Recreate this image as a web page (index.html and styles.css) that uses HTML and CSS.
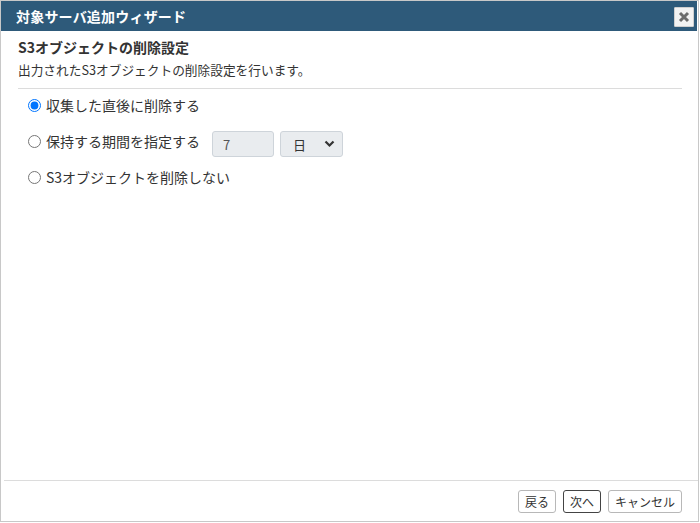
FILE: index.html
```html
<!DOCTYPE html>
<html lang="ja">
<head>
<meta charset="utf-8">
<link rel="stylesheet" href="styles.css">
</head>
<body>
<div class="dialog">
  <div class="titlebar">
    <span class="title">対象サーバ追加ウィザード</span>
    <button class="close" aria-label="close">
      <svg width="12" height="12" viewBox="0 0 12 12"><path d="M2 2 L10 10 M10 2 L2 10" stroke="#6b6b6b" stroke-width="3" stroke-linecap="butt"/></svg>
    </button>
  </div>
  <div class="content">
    <div class="heading">S3オブジェクトの削除設定</div>
    <div class="desc">出力されたS3オブジェクトの削除設定を行います。</div>
    <div class="sep"></div>
    <div class="options">
      <label class="opt first"><input type="radio" name="d" checked><span>収集した直後に削除する</span></label>
      <label class="opt second"><input type="radio" name="d"><span>保持する期間を指定する</span>
        <span class="num">7</span>
        <span class="sel">日<svg width="11" height="8" viewBox="0 0 11 8"><path d="M1.5 1.5 L5.5 5.5 L9.5 1.5" stroke="#333" stroke-width="2.2" fill="none"/></svg></span>
      </label>
      <label class="opt"><input type="radio" name="d"><span>S3オブジェクトを削除しない</span></label>
    </div>
  </div>
  <div class="footer">
    <button class="btn">戻る</button>
    <button class="btn primary">次へ</button>
    <button class="btn">キャンセル</button>
  </div>
</div>
</body>
</html>
```
FILE: styles.css
```css
html, body { margin: 0; padding: 0; background: #fff; }
body { font-family: "Noto Sans CJK JP", "Noto Sans", sans-serif; color: #333; }
.dialog {
  width: 697px; height: 520px;
  border: 1px solid #c8c8c8;
  display: flex; flex-direction: column;
  box-sizing: content-box;
}
.titlebar {
  height: 30px; margin: 0 1px 0 0;
  background: #2e5a7a;
  display: flex; align-items: center; justify-content: space-between;
  padding: 0 3px 0 15px;
}
.title { color: #fff; font-weight: bold; font-size: 14px; letter-spacing: 0.2px; }
.close {
  width: 20px; height: 20px; padding: 0; margin-top: 2px;
  background: #f2f2f2; border: 1px solid #cfcfcf; border-radius: 1px;
  display: flex; align-items: center; justify-content: center;
}
.content { flex: 1; padding: 6px 16px 0 17px; }
.heading { font-weight: bold; font-size: 14px; line-height: 20px; color: #333; }
.desc { font-size: 12.7px; line-height: 18px; margin-top: 4px; color: #333; }
.sep { height: 1px; background: #dcdcdc; margin-top: 9px; }
.options { padding: 0 0 0 10px; display: flex; flex-direction: column; }
.opt { display: flex; align-items: center; height: 32px; font-size: 14px; color: #333; }
.opt.second { height: 40px; }
.opt input { margin: 0 5px 0 0; width: 13px; height: 13px; }
.num {
  margin: 6px 0 0 12px; width: 62px; height: 26px; box-sizing: border-box;
  background: #e9ecef; border: 1px solid #ced4da; border-radius: 3px;
  padding: 0 10px; display: flex; align-items: center; font-size: 13px; color: #555;
}
.sel {
  margin: 6px 0 0 6px; width: 63px; height: 26px; box-sizing: border-box;
  background: #e9ecef; border: 1px solid #ced4da; border-radius: 3px;
  padding: 0 7px 0 12px; display: flex; align-items: center; justify-content: space-between;
  font-size: 13px; color: #333;
}
.footer {
  margin: 0 0 0 3px; border-top: 1px solid #dcdcdc;
  height: 40px; display: flex; justify-content: flex-end; align-items: center; gap: 7px;
  padding-right: 16px; padding-top: 0;
}
.btn {
  font-family: inherit; font-size: 12px; color: #333;
  height: 23px; padding: 0 6px; background: #fff;
  border: 1px solid #b8b8b8; border-radius: 3px;
}
.btn.primary { border-color: #444; }
```
